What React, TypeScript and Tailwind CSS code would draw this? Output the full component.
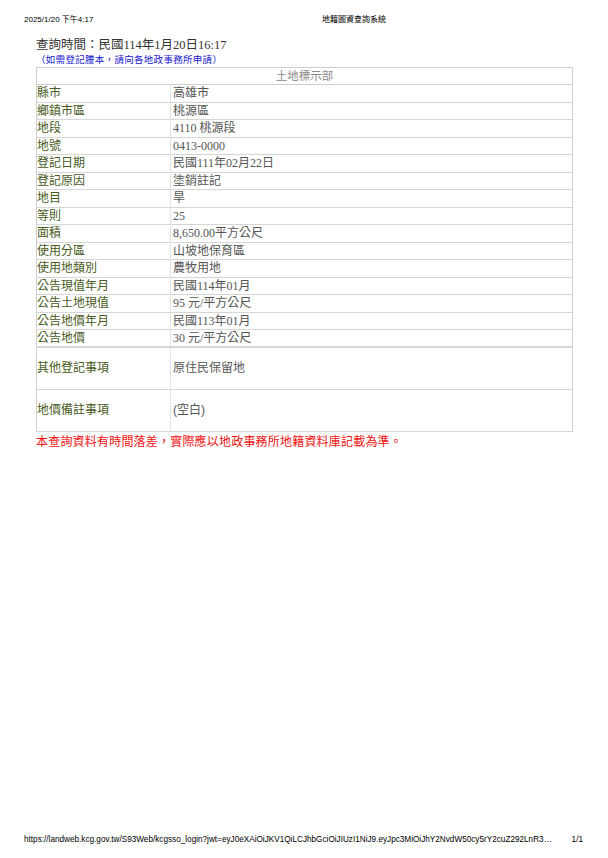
const rows: [string, string][] = [
  ["縣市", "高雄市"],
  ["鄉鎮市區", "桃源區"],
  ["地段", "4110 桃源段"],
  ["地號", "0413-0000"],
  ["登記日期", "民國111年02月22日"],
  ["登記原因", "塗銷註記"],
  ["地目", "旱"],
  ["等則", "25"],
  ["面積", "8,650.00平方公尺"],
  ["使用分區", "山坡地保育區"],
  ["使用地類別", "農牧用地"],
  ["公告現值年月", "民國114年01月"],
  ["公告土地現值", "95 元/平方公尺"],
  ["公告地價年月", "民國113年01月"],
  ["公告地價", "30 元/平方公尺"],
];

const tall: [string, string][] = [
  ["其他登記事項", "原住民保留地"],
  ["地價備註事項", "(空白)"],
];

const sans = "font-['Liberation_Sans','Noto_Sans_CJK_TC',sans-serif]";
const serif = "font-['Liberation_Serif','Noto_Sans_CJK_TC',serif]";

export default function App() {
  return (
    <main className={`w-[608px] h-[858px] bg-white flex flex-col ${sans}`}>
      {/* print header */}
      <header className="flex items-center pt-[15px] pl-[24px] text-[8px] leading-[10px] text-black">
        <span className="w-[298px]">2025/1/20 下午4:17</span>
        <span>地籍圖資查詢系統</span>
      </header>

      <section className="pl-[36px] pr-[35px] pt-[12px]">
        <h1 className={`text-[12.5px] leading-[17px] text-[#333] ${serif}`}>
          查詢時間：民國114年1月20日16:17
        </h1>
        <p className="text-[9.5px] leading-[12px] text-[#1a1ad0] tracking-[0.3px]">
          （如需登記謄本，請向各地政事務所申請）
        </p>

        <table className="w-full border-collapse border border-[#cfcfcf] mt-[1px]">
          <tbody>
            <tr className="h-[17px]">
              <td
                colSpan={2}
                className="text-center text-[11.5px] leading-[16px] text-[#8a8a8a] border-b border-[#cfcfcf] p-0"
              >
                土地標示部
              </td>
            </tr>
            {rows.map(([k, v], i) => (
              <tr
                key={k}
                className={`h-[17.5px] ${i === rows.length - 1 ? "border-b-2" : "border-b"} border-[#d6d6d6]`}
              >
                <td className="w-[134px] p-0 text-[12px] leading-[16px] text-[#485a1c] border-r border-[#e2e2e2]">
                  {k}
                </td>
                <td className={`p-0 pl-[2px] text-[12px] leading-[16px] text-[#555] ${serif}`}>
                  {v}
                </td>
              </tr>
            ))}
            {tall.map(([k, v]) => (
              <tr key={k} className="h-[42px] border-b border-[#d6d6d6]">
                <td className="w-[134px] p-0 text-[12px] text-[#485a1c] border-r border-[#e2e2e2]">
                  {k}
                </td>
                <td className="p-0 pl-[2px] text-[12px] text-[#555]">{v}</td>
              </tr>
            ))}
          </tbody>
        </table>

        <p className="text-[12px] leading-[16px] text-[#f01010] mt-[2px] tracking-[0.2px]">
          本查詢資料有時間落差，實際應以地政事務所地籍資料庫記載為準。
        </p>
      </section>

      {/* print footer */}
      <footer className="mt-auto mb-[13px] flex items-center pl-[24px] pr-[25px] text-[8.2px] leading-[10px] text-black">
        <span className="flex-1 truncate">
          https://landweb.kcg.gov.tw/S93Web/kcgsso_login?jwt=eyJ0eXAiOiJKV1QiLCJhbGciOiJIUzI1NiJ9.eyJpc3MiOiJhY2NvdW50cy5rY2cuZ292LnR3Il...
        </span>
        <span className="pl-[18px]">1/1</span>
      </footer>
    </main>
  );
}
